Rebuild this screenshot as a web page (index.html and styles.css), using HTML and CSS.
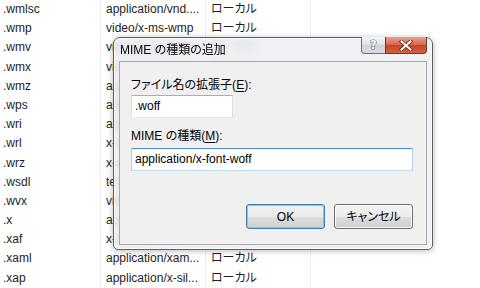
FILE: index.html
```html
<!DOCTYPE html>
<html lang="ja">
<head>
<meta charset="utf-8">
<title>MIME の種類の追加</title>
<link rel="stylesheet" href="styles.css">
</head>
<body>
<div class="list">
  <div class="row"><span class="cell c1">.wmlsc</span><span class="cell c2">application/vnd....</span><span class="cell c3">ローカル</span><span class="cell c4"></span></div>
  <div class="row"><span class="cell c1">.wmp</span><span class="cell c2">video/x-ms-wmp</span><span class="cell c3">ローカル</span><span class="cell c4"></span></div>
  <div class="row"><span class="cell c1">.wmv</span><span class="cell c2">video/x-ms-wmv</span><span class="cell c3">ローカル</span><span class="cell c4"></span></div>
  <div class="row"><span class="cell c1">.wmx</span><span class="cell c2">video/x-ms-wmx</span><span class="cell c3">ローカル</span><span class="cell c4"></span></div>
  <div class="row"><span class="cell c1">.wmz</span><span class="cell c2">application/x-m...</span><span class="cell c3">ローカル</span><span class="cell c4"></span></div>
  <div class="row"><span class="cell c1">.wps</span><span class="cell c2">application/vnd....</span><span class="cell c3">ローカル</span><span class="cell c4"></span></div>
  <div class="row"><span class="cell c1">.wri</span><span class="cell c2">application/x-m...</span><span class="cell c3">ローカル</span><span class="cell c4"></span></div>
  <div class="row"><span class="cell c1">.wrl</span><span class="cell c2">x-world/x-vrml</span><span class="cell c3">ローカル</span><span class="cell c4"></span></div>
  <div class="row"><span class="cell c1">.wrz</span><span class="cell c2">x-world/x-vrml</span><span class="cell c3">ローカル</span><span class="cell c4"></span></div>
  <div class="row"><span class="cell c1">.wsdl</span><span class="cell c2">text/xml</span><span class="cell c3">ローカル</span><span class="cell c4"></span></div>
  <div class="row"><span class="cell c1">.wvx</span><span class="cell c2">video/x-ms-wvx</span><span class="cell c3">ローカル</span><span class="cell c4"></span></div>
  <div class="row"><span class="cell c1">.x</span><span class="cell c2">application/dire...</span><span class="cell c3">ローカル</span><span class="cell c4"></span></div>
  <div class="row"><span class="cell c1">.xaf</span><span class="cell c2">x-world/x-vrml</span><span class="cell c3">ローカル</span><span class="cell c4"></span></div>
  <div class="row"><span class="cell c1">.xaml</span><span class="cell c2">application/xam...</span><span class="cell c3">ローカル</span><span class="cell c4"></span></div>
  <div class="row"><span class="cell c1">.xap</span><span class="cell c2">application/x-sil...</span><span class="cell c3">ローカル</span><span class="cell c4"></span></div>
</div>

<div class="dialog">
  <div class="titlebar">
    <span class="title">MIME の種類の追加</span>
    <div class="caption-btns">
      <div class="cap help">?</div>
      <div class="cap close">
        <svg width="14" height="11" viewBox="0 0 14 11"><path d="M2.5 1.5 L11.5 9.5 M11.5 1.5 L2.5 9.5" stroke="#5a2a22" stroke-width="3.6" stroke-linecap="square" fill="none"/><path d="M2.5 1.5 L11.5 9.5 M11.5 1.5 L2.5 9.5" stroke="#ffffff" stroke-width="2" stroke-linecap="square" fill="none"/></svg>
      </div>
    </div>
  </div>
  <div class="client">
    <div class="lbl">ファイル名の拡張子(<u>E</u>):</div>
    <div class="tb tb1">.woff</div>
    <div class="lbl lbl2">MIME の種類(<u>M</u>):</div>
    <div class="tb tb2">application/x-font-woff</div>
    <div class="btns">
      <div class="btn default">OK</div>
      <div class="btn">キャンセル</div>
    </div>
  </div>
</div>
</body>
</html>
```

FILE: styles.css
```css
* { box-sizing: border-box; }
html, body {
  margin: 0;
  padding: 0;
  width: 480px;
  height: 288px;
  overflow: hidden;
  background: #ffffff;
  font-family: "Liberation Sans", "Noto Sans CJK JP", sans-serif;
  font-size: 12px;
  font-feature-settings: "palt";
  color: #1e1e1e;
}
.list {
  display: grid;
  grid-auto-rows: 19.2px;
}
.row {
  display: grid;
  grid-template-columns: 101px 105px 105px 1fr;
}
.cell {
  line-height: 18.4px;
  white-space: nowrap;
  overflow: hidden;
  border-right: 1px solid #eeeeee;
}
.c1 { padding-left: 3px; }
.c2 { padding-left: 5px; }
.c3 { padding-left: 5px; }
.c4 { border-right: none; }

.dialog {
  position: absolute;
  left: 113px;
  top: 37px;
  width: 320px;
  height: 213px;
  border: 1px solid #5e5e5e;
  border-radius: 7px 7px 5px 5px;
  background: rgba(236, 238, 241, 0.82);
  backdrop-filter: blur(4px);
  box-shadow: 0 1px 6px rgba(0, 0, 0, 0.28), inset 0 0 0 1px rgba(255, 255, 255, 0.75);
  display: flex;
  flex-direction: column;
}
.titlebar {
  height: 23px;
  display: flex;
  align-items: center;
  padding: 0 5px 0 6px;
}
.title {
  flex: 1;
  color: #000000;
  line-height: 16px;
  padding-top: 1px;
}
.caption-btns {
  align-self: flex-start;
  margin-top: -1px;
  display: flex;
}
.cap {
  height: 17px;
  display: flex;
  align-items: center;
  justify-content: center;
  border: 1px solid #6f6f6f;
  border-top: none;
}
.help {
  width: 24px;
  border-right: none;
  border-radius: 0 0 0 4px;
  background: linear-gradient(#f3f4f6, #dfe1e5 50%, #cfd2d7 51%, #d8dbdf);
  color: #ffffff;
  font-family: "DejaVu Sans", sans-serif;
  font-weight: bold;
  font-size: 12px;
  -webkit-text-stroke: 1px #5c6068;
  paint-order: stroke fill;
}
.close {
  width: 42px;
  border-radius: 0 0 4px 0;
  border-color: #6b3a30;
  background: linear-gradient(#e9a08e, #d8674d 48%, #c7432a 52%, #d5603f);
}

.client {
  height: 184px;
  margin: 0 5px;
  border: 1px solid #a9a9a9;
  background: #f0f0f0;
  padding: 15px 13px 0 11px;
  display: flex;
  flex-direction: column;
  align-items: flex-start;
}
.lbl {
  line-height: 16px;
  color: #000000;
}
.lbl u { text-underline-offset: 2px; }
.lbl2 { margin-top: 10px; }
.tb {
  height: 23px;
  background: #ffffff;
  border: 1px solid #dadde3;
  border-top-color: #abadb3;
  border-bottom-color: #e3e9ef;
  line-height: 20px;
  padding-left: 3px;
  color: #000000;
  border-radius: 1px;
}
.tb1 {
  margin-top: 2px;
  width: 102px;
}
.tb2 {
  margin-top: 4px;
  align-self: stretch;
  border-color: #a9d0ea;
  border-top-color: #4f8ec2;
  border-bottom-color: #bcdcef;
}
.btns {
  margin-top: 33px;
  align-self: stretch;
  display: flex;
  justify-content: flex-end;
  gap: 9px;
}
.btn {
  width: 79px;
  height: 25px;
  border: 1px solid #707070;
  border-radius: 3px;
  background: linear-gradient(#f2f2f2, #ebebeb 50%, #dddddd 51%, #cfcfcf);
  box-shadow: inset 0 0 0 1px rgba(255, 255, 255, 0.8);
  display: flex;
  align-items: center;
  justify-content: center;
  color: #000000;
  line-height: 16px;
}
.btn.default {
  border-color: #3c7fb1;
  box-shadow: inset 0 0 0 1px #5fd3f8;
  background: linear-gradient(#eaf6fd, #d9f0fc 50%, #bee6fd 51%, #a7d9f5);
  background: linear-gradient(#f2f2f2, #ebebeb 50%, #dddddd 51%, #cfcfcf);
}
```
